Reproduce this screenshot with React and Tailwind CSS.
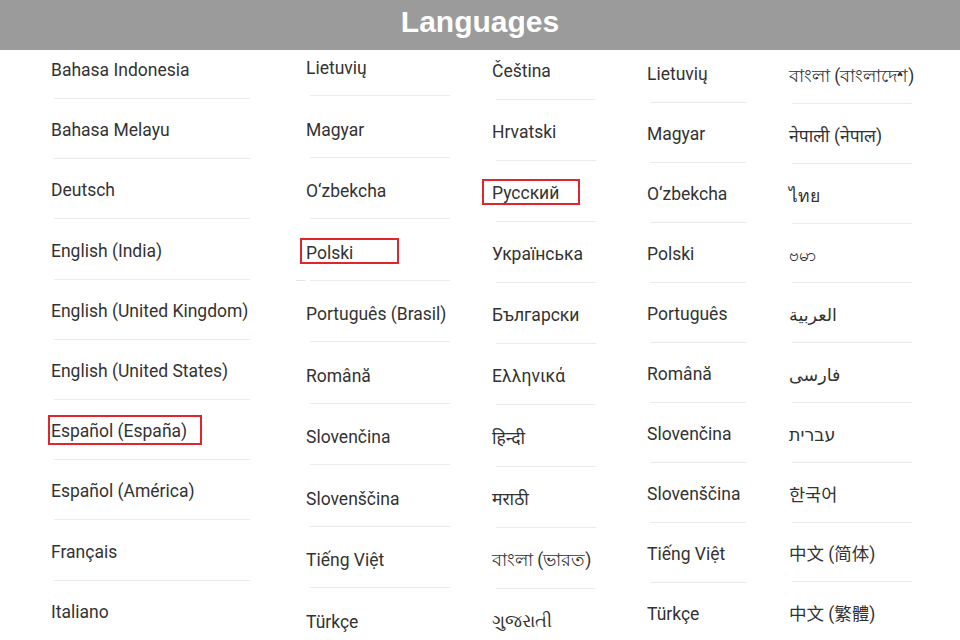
import React from "react";

const cols = [
  {
    ml: "ml-[51px]", w: "w-[200px]", pt: "pt-[8px]", d1: "mt-[16px]", d2: "mb-[19.2px]", dl: "ml-[3px]", dw: "w-[196px]",
    items: ["Bahasa Indonesia", "Bahasa Melayu", "Deutsch", "English (India)", "English (United Kingdom)", "English (United States)", "Español (España)", "Español (América)", "Français", "Italiano"],
    box: { idx: 6, cls: "left-[-3px] top-[-4px] w-[154px] h-[30px]" },
  },
  {
    ml: "ml-[55px]", w: "w-[144px]", pt: "pt-[6px]", d1: "mt-[15px]", d2: "mb-[21.5px]", dl: "ml-[4px]", dw: "w-[140px]",
    items: ["Lietuvių", "Magyar", "O‘zbekcha", "Polski", "Português (Brasil)", "Română", "Slovenčina", "Slovenščina", "Tiếng Việt", "Türkçe"],
    box: { idx: 3, cls: "left-[-6px] top-[-3px] w-[99px] h-[26px]" },
    dash: 3,
  },
  {
    ml: "ml-[42px]", w: "w-[104px]", pt: "pt-[9px]", d1: "mt-[16px]", d2: "mb-[20.1px]", dl: "ml-[4px]", dw: "w-[100px]",
    items: ["Čeština", "Hrvatski", "Русский", "Українська", "Български", "Ελληνικά", "हिन्दी", "मराठी", "বাংলা (ভারত)", "ગુજરાતી"],
    box: { idx: 2, cls: "left-[-10px] top-[-2px] w-[98px] h-[26px]" },
  },
  {
    ml: "ml-[51px]", w: "w-[99px]", pt: "pt-[12px]", d1: "mt-[16px]", d2: "mb-[19px]", dl: "ml-[3px]", dw: "w-[96px]",
    items: ["Lietuvių", "Magyar", "O‘zbekcha", "Polski", "Português", "Română", "Slovenčina", "Slovenščina", "Tiếng Việt", "Türkçe"],
  },
  {
    ml: "ml-[43px]", w: "w-[123px]", pt: "pt-[14px]", d1: "mt-[15px]", d2: "mb-[19.8px]", dl: "ml-[3px]", dw: "w-[120px]",
    items: ["বাংলা (বাংলাদেশ)", "नेपाली (नेपाल)", "ไทย", "ဗမာ", "العربية", "فارسی", "עברית", "한국어", "中文 (简体)", "中文 (繁體)"],
  },
];

export default function App() {
  return (
    <div className="w-[960px] h-[640px] overflow-hidden bg-white flex flex-col font-['Roboto','Noto_Sans','DejaVu_Sans','Noto_Sans_CJK_SC',sans-serif]">
      <div className="h-[50px] shrink-0 bg-[#9b9b9b] flex items-center justify-center">
        <span className="text-white font-bold text-[30px] leading-none font-['Liberation_Sans',Arial,sans-serif] pb-[6px]">Languages</span>
      </div>
      <div className="flex flex-1">
        {cols.map((c, ci) => (
          <div key={ci} className={`${c.ml} ${c.w} ${c.pt} shrink-0 flex flex-col`}>
            {c.items.map((t, i) => (
              <div key={i} className="flex flex-col">
                <div className="relative h-[24px] leading-[24px] text-[17.5px] text-[#333333] whitespace-nowrap">
                  <span dir="auto">{t}</span>
                  {c.box && c.box.idx === i && (
                    <div className={`absolute ${c.box.cls} border-2 border-[#e0252c]`} />
                  )}
                </div>
                <div className={`relative ${c.d1} ${c.d2} ${c.dl} ${c.dw} h-px bg-[#ebebeb]`}>
                  {c.dash === i && (
                    <div className="absolute left-[-14px] top-0 w-[9px] h-px bg-[#e3e3e3]" />
                  )}
                </div>
              </div>
            ))}
          </div>
        ))}
      </div>
    </div>
  );
}
